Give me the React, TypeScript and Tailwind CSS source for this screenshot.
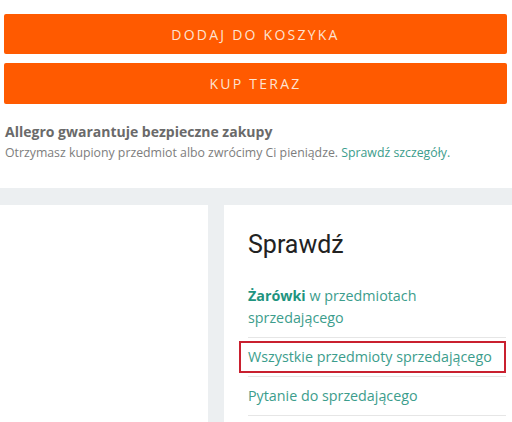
import React from "react";

export default function App() {
  return (
    <div className="w-[512px] h-[422px] overflow-hidden bg-white" style={{ fontFamily: '"Open Sans", sans-serif' }}>
      <div className="pl-[4px] pr-[5px] pt-[14px]">
        <button className="w-full h-[40px] rounded-[2px] bg-[#ff5a00] text-[#fde3d2] text-[14px] tracking-[0.16em] flex items-center justify-center">
          DODAJ DO KOSZYKA
        </button>
        <button className="mt-[9px] w-full h-[41px] rounded-[2px] bg-[#ff5a00] text-[#fde3d2] text-[14px] tracking-[0.16em] flex items-center justify-center">
          KUP TERAZ
        </button>
      </div>
      <div className="pl-[5px] pt-[18px] h-[84px]">
        <div className="text-[14px] leading-[19px] font-bold text-[#6a6a6a]">Allegro gwarantuje bezpieczne zakupy</div>
        <div className="text-[12.3px] leading-[18px] mt-[3px] text-[#7d7d7d]">
          Otrzymasz kupiony przedmiot albo zwrócimy Ci pieniądze. <span className="text-[#3c9d8c]">Sprawdź szczegóły.</span>
        </div>
      </div>
      <div className="bg-[#eceff1] pt-[17px] h-[234px] flex gap-[16px]">
        <div className="w-[208px] bg-white" />
        <div className="flex-1 bg-white pl-[24px] pr-[6px] pt-[24px]">
          <h2 className="text-[25px] leading-[32px] text-[#222222]" style={{ fontFamily: 'Roboto, sans-serif' }}>Sprawdź</h2>
          <ul className="mt-[16px] text-[14.3px] leading-[22px] text-[#3c9d8c]">
            <li className="py-[8px] border-b border-[#e6e6e6]">
              <span className="font-bold text-[#1f9480]">Żarówki</span> w przedmiotach<br />sprzedającego
            </li>
            <li className="relative py-[8px] border-b border-[#e6e6e6]">
              Wszystkie przedmioty sprzedającego
              <div className="absolute left-[-9px] right-0 top-[3px] bottom-[3px] border-2 border-[#c9202f]" />
            </li>
            <li className="py-[8px] border-b border-[#e6e6e6]">Pytanie do sprzedającego</li>
          </ul>
        </div>
      </div>
    </div>
  );
}
